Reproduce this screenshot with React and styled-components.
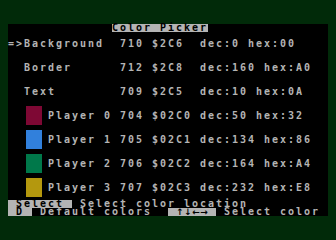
import React from 'react'
import styled, { createGlobalStyle } from 'styled-components'

const Global = createGlobalStyle`
  html, body {
    margin: 0;
    padding: 0;
    background: #012a09;
  }
`

const Border = styled.div`
  width: 336px;
  height: 240px;
  background: #012a09;
  padding: 24px 8px;
  box-sizing: border-box;
`

const Screen = styled.div`
  width: 320px;
  height: 192px;
  background: #000;
  display: flex;
  flex-direction: column;
  font-family: "DejaVu Sans Mono", "Liberation Mono", monospace;
  font-weight: bold;
  font-size: 10px;
  letter-spacing: 1.98px;
  color: #b4b4b4;
`

const Line = styled.div`
  height: 8px;
  line-height: 8px;
  white-space: pre;
`

const Inv = styled.span`
  display: inline-block;
  height: 8px;
  line-height: 8px;
  vertical-align: top;
  background: #b4b4b4;
  color: #000;
`

const Arrow = styled.span`
  display: inline-block;
  width: 8px;
  text-align: center;
  font-family: "DejaVu Sans", sans-serif;
  font-size: 9px;
  letter-spacing: 0;
`

const Entry = styled.div`
  height: 24px;
  display: flex;
  align-items: center;
`

const Swatch = styled.div`
  width: 16px;
  height: 19px;
  margin: 2px 6px 0 18px;
  align-self: flex-start;
  background: ${(p) => p.color};
`

const Text = styled.span`
  height: 8px;
  line-height: 8px;
  white-space: pre;
`

const locations = [
  '=>Background  710 $2C6  dec:0 hex:00',
  '  Border      712 $2C8  dec:160 hex:A0',
  '  Text        709 $2C5  dec:10 hex:0A',
]

const players = [
  { c: '#7e0834', t: 'Player 0 704 $02C0 dec:50 hex:32' },
  { c: '#3180dc', t: 'Player 1 705 $02C1 dec:134 hex:86' },
  { c: '#00784a', t: 'Player 2 706 $02C2 dec:164 hex:A4' },
  { c: '#b4980e', t: 'Player 3 707 $02C3 dec:232 hex:E8' },
]

export default function App() {
  return (
    <>
      <Global />
      <Border>
        <Screen>
          <Line>{'             '}<Inv>Color Picker</Inv></Line>
          {locations.map((l) => (
            <Entry key={l}><Text>{l}</Text></Entry>
          ))}
          {players.map((p) => (
            <Entry key={p.t}>
              <Swatch color={p.c} />
              <Text>{p.t}</Text>
            </Entry>
          ))}
          <Line><Inv>{' Select '}</Inv>{' Select color location'}</Line>
          <Line>
            <Inv>{' D '}</Inv>{' Default colors  '}
            <Inv>
              {' '}
              {['↑', '↓', '←', '→'].map((a) => <Arrow key={a}>{a}</Arrow>)}
              {' '}
            </Inv>
            {' Select color'}
          </Line>
        </Screen>
      </Border>
    </>
  )
}
